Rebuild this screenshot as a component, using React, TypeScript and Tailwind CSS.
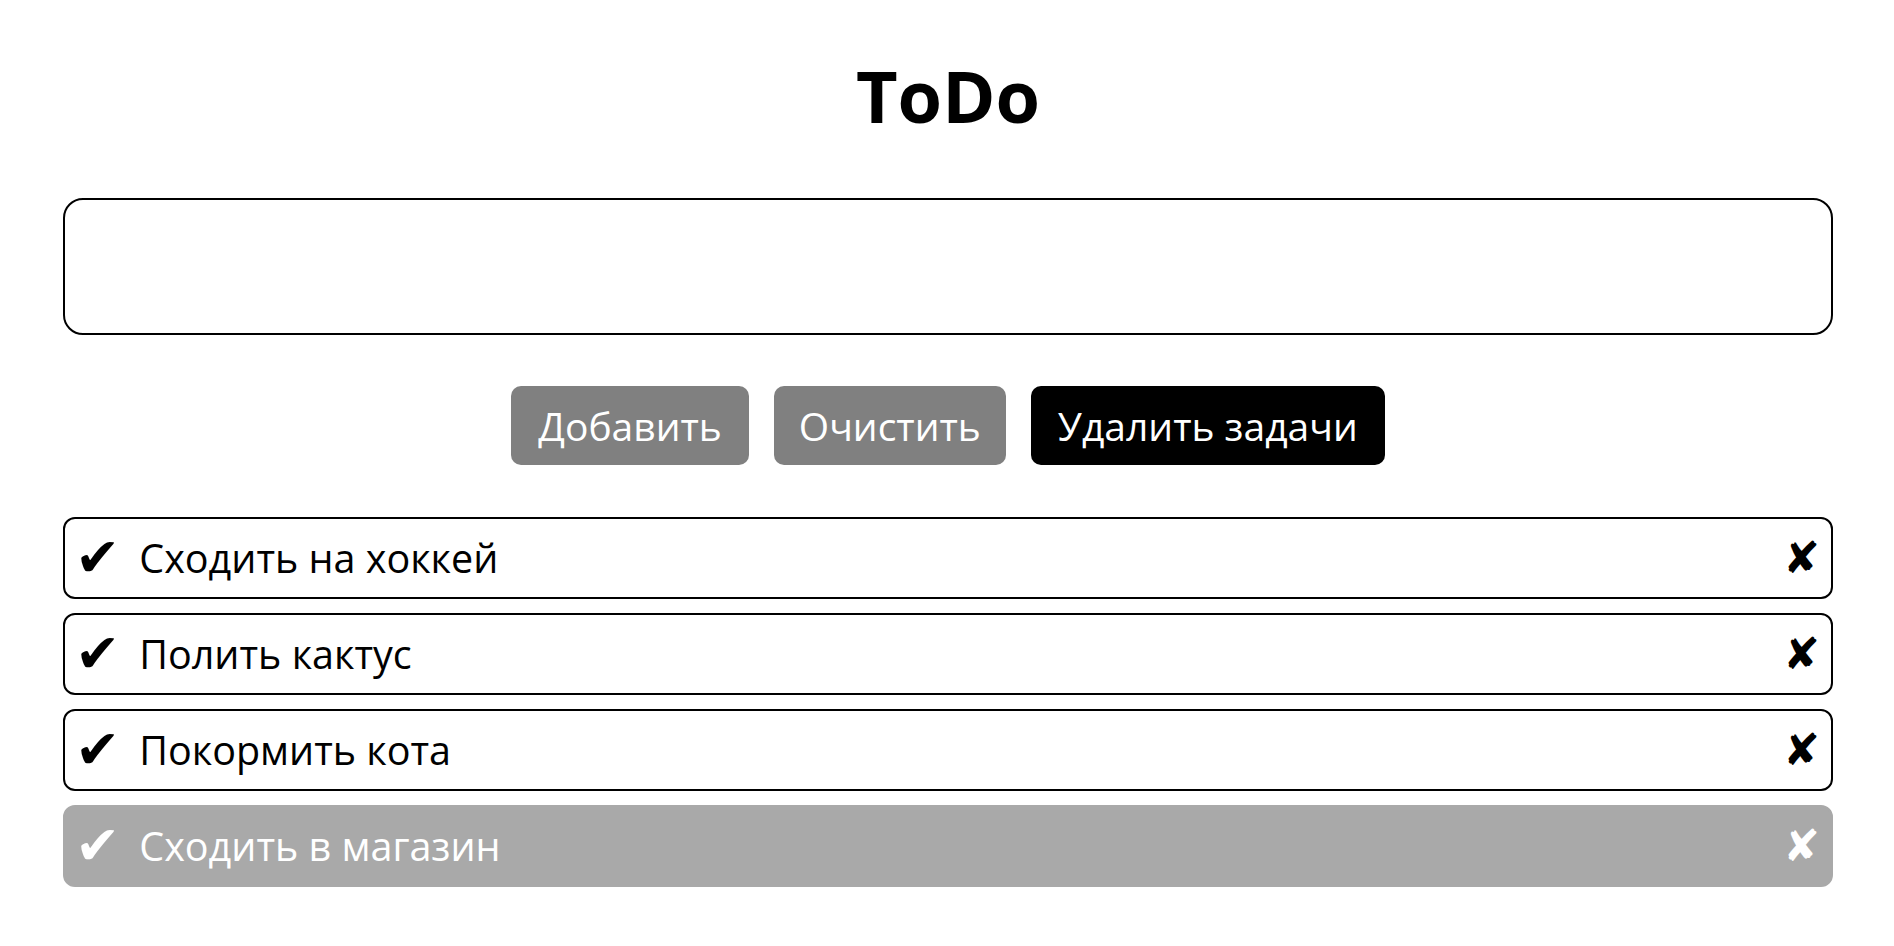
import React, { useState } from "react";

type Task = { id: number; text: string; done: boolean };

const initialTasks: Task[] = [
  { id: 1, text: "Сходить на хоккей", done: false },
  { id: 2, text: "Полить кактус", done: false },
  { id: 3, text: "Покормить кота", done: false },
  { id: 4, text: "Сходить в магазин", done: true },
];

export default function App() {
  const [tasks, setTasks] = useState<Task[]>(initialTasks);
  const [value, setValue] = useState("");

  const addTask = () => {
    if (!value.trim()) return;
    setTasks((curr) => [...curr, { id: Date.now(), text: value.trim(), done: false }]);
    setValue("");
  };

  return (
    <div className="min-h-screen bg-white pl-[63px] pr-[61px] font-['Open_Sans','DejaVu_Sans',sans-serif] text-black">
      <h1 className="mt-[46px] text-center text-[72px] font-bold leading-[98px]">ToDo</h1>

      <textarea
        value={value}
        onChange={(e) => setValue(e.target.value)}
        className="mt-[54px] block h-[137px] w-full resize-none rounded-[20px] border-2 border-black px-4 py-3 text-[32px] outline-none"
      />

      <div className="mt-[51px] flex justify-center gap-[25px]">
        <button
          onClick={addTask}
          className="h-[79px] rounded-[10px] bg-[#808080] px-[27px] text-[39px] leading-[54px] text-white"
        >
          Добавить
        </button>
        <button
          onClick={() => setValue("")}
          className="h-[79px] rounded-[10px] bg-[#808080] px-[25px] text-[39px] leading-[54px] text-white"
        >
          Очистить
        </button>
        <button
          onClick={() => setTasks([])}
          className="h-[79px] rounded-[10px] bg-black px-[27px] text-[39px] leading-[54px] text-white"
        >
          Удалить задачи
        </button>
      </div>

      <ul className="mt-[52px] flex flex-col gap-[14px]">
        {tasks.map((task) => (
          <li
            key={task.id}
            className={`flex h-[82px] items-center rounded-[12px] border-2 pl-[10px] pr-[11px] ${
              task.done ? "border-[#a9a9a9] bg-[#a9a9a9] text-white" : "border-black bg-white text-black"
            }`}
          >
            <span
              className="cursor-pointer font-['DejaVu_Sans',sans-serif] text-[54px] leading-none"
              onClick={() =>
                setTasks((curr) => curr.map((t) => (t.id === task.id ? { ...t, done: !t.done } : t)))
              }
            >
              ✔
            </span>
            <span className="ml-[19px] text-[39.5px] leading-[54px]">{task.text}</span>
            <span
              className="ml-auto cursor-pointer font-['DejaVu_Sans',sans-serif] text-[44px] leading-none"
              onClick={() => setTasks((curr) => curr.filter((t) => t.id !== task.id))}
            >
              ✘
            </span>
          </li>
        ))}
      </ul>
    </div>
  );
}
